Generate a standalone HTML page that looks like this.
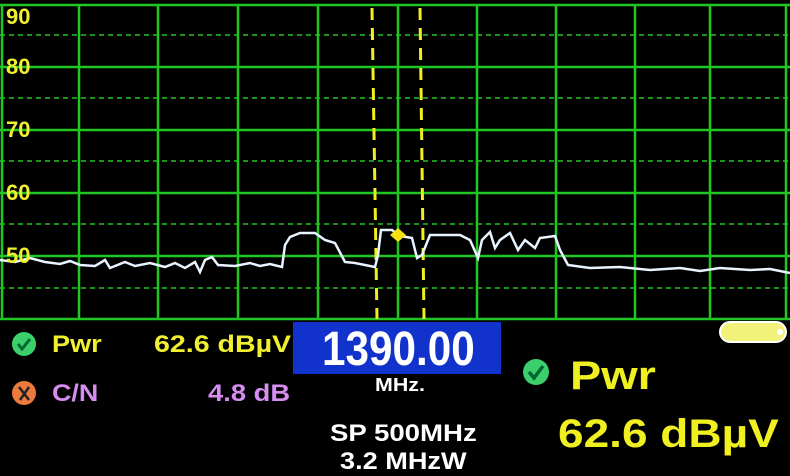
<!DOCTYPE html>
<html><head><style>
body{margin:0;width:790px;height:475px;background:#000;overflow:hidden;position:relative;font-family:"Liberation Sans",sans-serif}
.t{position:absolute;font-weight:bold;white-space:nowrap;transform-origin:left top}
</style></head><body>
<svg width="790" height="475" style="position:absolute;left:0;top:0">
<g stroke="#22c622" stroke-width="2.5" fill="none">
<line x1="0" y1="5" x2="790" y2="5"/><line x1="0" y1="67" x2="790" y2="67"/><line x1="0" y1="130" x2="790" y2="130"/><line x1="0" y1="193" x2="790" y2="193"/><line x1="0" y1="256" x2="790" y2="256"/><line x1="0" y1="319" x2="790" y2="319"/>
<line x1="2" y1="5" x2="2" y2="319"/><line x1="79" y1="5" x2="79" y2="319"/><line x1="158" y1="5" x2="158" y2="319"/><line x1="238" y1="5" x2="238" y2="319"/><line x1="318" y1="5" x2="318" y2="319"/><line x1="398" y1="5" x2="398" y2="319"/><line x1="477" y1="5" x2="477" y2="319"/><line x1="556" y1="5" x2="556" y2="319"/><line x1="635" y1="5" x2="635" y2="319"/><line x1="710" y1="5" x2="710" y2="319"/><line x1="786" y1="5" x2="786" y2="319"/>
</g>
<g stroke="#22c622" stroke-width="1.5" stroke-dasharray="5,4">
<line x1="0" y1="35" x2="790" y2="35"/><line x1="0" y1="98" x2="790" y2="98"/><line x1="0" y1="161" x2="790" y2="161"/><line x1="0" y1="224" x2="790" y2="224"/><line x1="0" y1="288" x2="790" y2="288"/>
</g>
<g stroke="#f0f020" stroke-width="3" stroke-dasharray="12,8">
<line x1="372" y1="8" x2="377" y2="319"/><line x1="420" y1="8" x2="424" y2="319"/>
</g>
<polyline fill="none" stroke="#e8f4ff" stroke-width="2.5" points="0,260 15,262 30,258 45,262 60,264 70,261 80,265 95,266 105,260 110,268 125,262 135,266 150,263 165,267 175,263 185,268 195,262 200,272 205,260 212,257 218,265 235,266 250,263 260,266 270,264 282,267 285,245 290,237 300,233 315,233 325,240 335,243 345,262 355,263 375,267 378,255 381,230 392,230 400,236 412,238 417,258 422,255 430,235 460,235 470,240 478,258 482,240 490,232 495,248 500,240 510,233 518,250 525,240 535,248 540,238 555,236 560,250 568,265 590,268 620,267 650,270 680,268 700,271 720,268 750,270 770,269 790,273"/>
<polygon points="398,228 406,235 398,242 390,235" fill="#f5e010"/>
<rect x="293" y="322" width="208" height="52" fill="#1232cc"/>
<rect x="720" y="322" width="66" height="20" rx="10" fill="#f2f27a" stroke="#fff" stroke-width="2"/>
<circle cx="780" cy="332" r="3" fill="#fff"/>
<circle cx="24" cy="344" r="12" fill="#3bd06b"/><path d="M18 344l4 5 8-10" stroke="#063" stroke-width="3" fill="none"/>
<circle cx="24" cy="393" r="12" fill="#ec7a3c"/><path d="M19 387l10 13M29 387l-9 13" stroke="#222" stroke-width="2.5"/>
<circle cx="536" cy="372" r="13" fill="#3bd06b"/><path d="M529 372l5 6 9-12" stroke="#063" stroke-width="3.5" fill="none"/>
</svg>
<div class="t" style="left:6px;top:4px;font-size:22px;color:#f0f030">90</div>
<div class="t" style="left:6px;top:54px;font-size:22px;color:#f0f030">80</div>
<div class="t" style="left:6px;top:117px;font-size:22px;color:#f0f030">70</div>
<div class="t" style="left:6px;top:180px;font-size:22px;color:#f0f030">60</div>
<div class="t" style="left:6px;top:243px;font-size:22px;color:#f0f030">50</div>
<div class="t" style="left:52px;top:331px;font-size:24px;color:#f0f030;transform:scaleX(1.13)">Pwr</div>
<div class="t" style="left:154px;top:331px;font-size:24px;color:#f0f030;transform:scaleX(1.19)">62.6 dBµV</div>
<div class="t" style="left:52px;top:380px;font-size:24px;color:#d68cf0;transform:scaleX(1.12)">C/N</div>
<div class="t" style="left:208px;top:380px;font-size:24px;color:#d68cf0;transform:scaleX(1.14)">4.8 dB</div>
<div class="t" style="left:322px;top:322px;font-size:48px;color:#fff;transform:scaleX(.88)">1390.00</div>
<div class="t" style="left:375px;top:375px;font-size:18px;color:#fff;transform:scaleX(1.19)">MHz.</div>
<div class="t" style="left:330px;top:420px;font-size:24px;color:#fff;transform:scaleX(1.15)">SP 500MHz</div>
<div class="t" style="left:340px;top:448px;font-size:24px;color:#fff;transform:scaleX(1.13)">3.2 MHzW</div>
<div class="t" style="left:570px;top:354px;font-size:40px;color:#f0f020;transform:scaleX(1.17)">Pwr</div>
<div class="t" style="left:558px;top:412px;font-size:40px;color:#f0f020;transform:scaleX(1.15)">62.6 dBµV</div>
</body></html>
